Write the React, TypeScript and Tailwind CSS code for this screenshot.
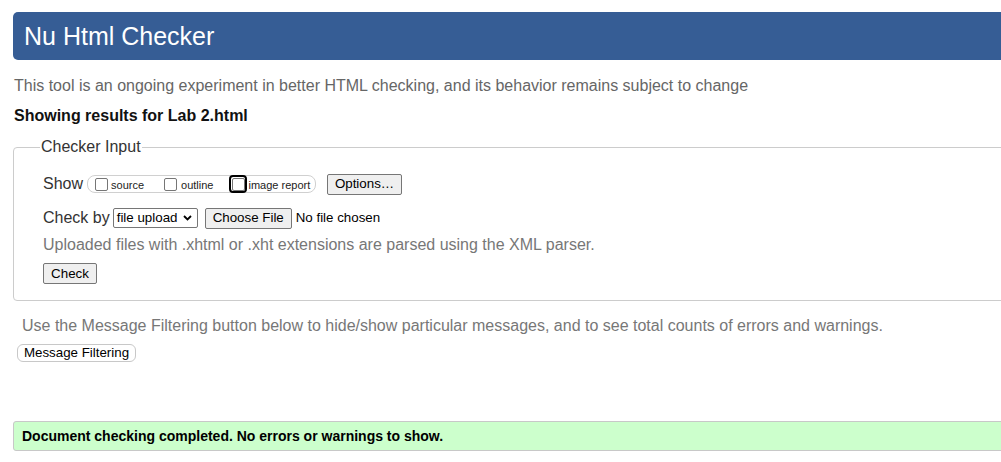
import { useState } from "react";

const font = "font-['Liberation_Sans',Arial,sans-serif]";

const Checkbox = ({ focused = false }: { focused?: boolean }) => {
  const [on, setOn] = useState(false);
  return (
    <span
      onClick={() => setOn((p) => !p)}
      className={
        focused
          ? "flex h-[18px] w-[18px] items-center justify-center rounded-[4px] border-2 border-black"
          : "flex h-[13px] w-[13px] items-center justify-center"
      }
    >
      <span className="block h-[13px] w-[13px] rounded-[2px] border border-[#767676] bg-white text-[10px] leading-[11px] text-center">
        {on ? "✓" : ""}
      </span>
    </span>
  );
};

const Btn = ({ label, className = "" }: { label: string; className?: string }) => (
  <button
    className={
      "flex h-[21px] items-center justify-center rounded-[2px] border border-[#767676] bg-[#efefef] px-[6px] text-[13.33px] leading-none text-black " +
      className
    }
  >
    {label}
  </button>
);

const Header = () => (
  <header className="mt-[12px] flex h-[48px] items-center rounded-l-[5px] bg-[#365d95] pl-[11px]">
    <h1 className="text-[25px] leading-[48px] text-white">Nu Html Checker</h1>
  </header>
);

const CheckerInput = () => (
  <fieldset className="mt-[13px] rounded-[4px] border border-[#ccc] pb-[16px] pl-[26px]">
    <legend className="px-[1px] text-[16px] leading-[18px] text-[#333]">Checker Input</legend>
    <div className="ml-[3px] mt-[17px] flex h-[22px] items-center text-[#333]">
      <span className="text-[16px] leading-[18px]">Show</span>
      <div className="ml-[4px] flex h-[18px] w-[229px] items-center rounded-[8px] border border-[#d0d0d0] pl-[7px] text-[11px] text-[#222]">
        <Checkbox />
        <span className="ml-[3px] mr-[20px] mt-[2px]">source</span>
        <Checkbox />
        <span className="ml-[4px] mr-[18px] mt-[2px]">outline</span>
        <span className="-mx-[2px]">
          <Checkbox focused />
        </span>
        <span className="ml-[3px] mt-[2px]">image report</span>
      </div>
      <Btn label="Options…" className="ml-[11px] w-[75px]" />
    </div>
    <div className="ml-[3px] mt-[12px] flex h-[22px] items-center text-[#333]">
      <span className="text-[16px] leading-[18px]">Check by</span>
      <div className="ml-[3px] flex h-[20px] w-[85px] items-center justify-between rounded-[2px] border border-[#767676] bg-white pl-[3px] pr-[5px] text-[13.33px] text-black">
        <span>file upload</span>
        <svg width="9" height="6" viewBox="0 0 9 6">
          <path d="M1 1 L4.5 4.5 L8 1" fill="none" stroke="#000" strokeWidth="1.8" />
        </svg>
      </div>
      <Btn label="Choose File" className="ml-[7px] w-[87px]" />
      <span className="ml-[4px] text-[13.33px] text-black">No file chosen</span>
    </div>
    <p className="ml-[3px] mt-[7px] text-[16px] leading-[18px] text-[#777]">
      Uploaded files with .xhtml or .xht extensions are parsed using the XML parser.
    </p>
    <Btn label="Check" className="ml-[3px] mt-[9px] w-[54px]" />
  </fieldset>
);

export default function App() {
  return (
    <div className={"w-[1001px] overflow-hidden bg-white " + font}>
      <div className="w-[1060px] pb-[11px] pl-[13px]">
        <Header />
        <p className="ml-[1px] mt-[17px] text-[16px] leading-[18px] text-[#666]">
          This tool is an ongoing experiment in better HTML checking, and its behavior remains subject to change
        </p>
        <p className="ml-[1px] mt-[12px] text-[16px] font-bold leading-[18px] text-[#111]">
          Showing results for Lab 2.html
        </p>
        <CheckerInput />
        <p className="ml-[9px] mt-[16px] text-[16px] leading-[18px] text-[#777]">
          Use the Message Filtering button below to hide/show particular messages, and to see total counts of errors and warnings.
        </p>
        <button className="ml-[4px] mt-[9px] flex h-[18px] w-[119px] items-center justify-center rounded-[6px] border border-[#c8c8c8] bg-white text-[13.33px] leading-none text-black">
          Message Filtering
        </button>
        <div className="mt-[59px] flex h-[30px] items-center rounded-l-[3px] border border-[#c8c8c8] bg-[#ccffcc] pl-[8px]">
          <p className="text-[14px] font-bold text-black">
            Document checking completed. No errors or warnings to show.
          </p>
        </div>
      </div>
    </div>
  );
}
